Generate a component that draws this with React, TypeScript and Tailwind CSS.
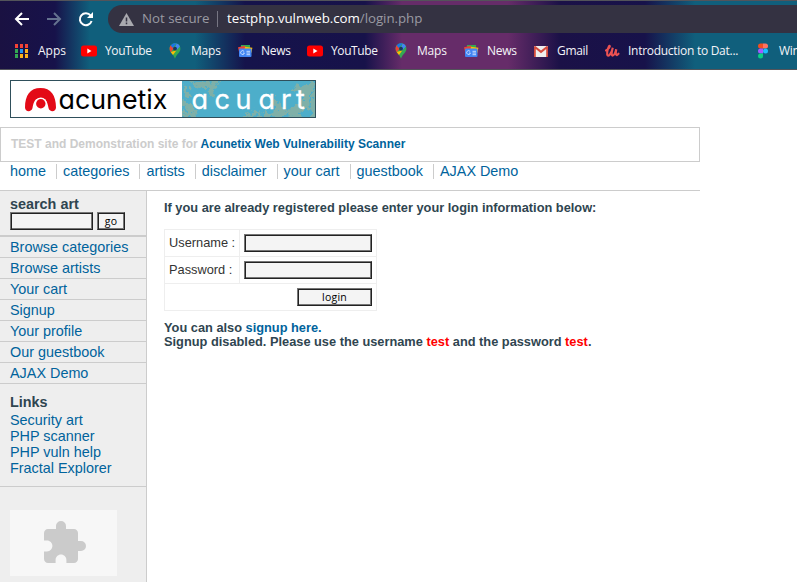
import React from "react";

const UI = "font-['Open_Sans','Noto_Sans',sans-serif]";

function AppsIcon() {
  const c = ["#f44336", "#f44336", "#f44336", "#34a853", "#2196f3", "#fbb01b", "#34a853", "#fbb01b", "#fbb01b"];
  return (
    <svg width="16" height="16" viewBox="0 0 16 16" shapeRendering="crispEdges">
      {c.map((f, i) => (
        <rect key={i} x={1 + (i % 3) * 5} y={1 + Math.floor(i / 3) * 5} width="3" height="4" fill={f} />
      ))}
    </svg>
  );
}

function YouTubeIcon() {
  return (
    <svg width="16" height="16" viewBox="0 0 16 16">
      <rect x="0" y="2.5" width="16" height="11" rx="2.5" fill="#f00" />
      <path d="M6.3 5.6v4.8L10.5 8z" fill="#fff" />
    </svg>
  );
}

function MapsIcon() {
  return (
    <svg width="16" height="16" viewBox="0 0 16 16">
      <path d="M8 .3C5 .3 2.600 2.700 2.600 5.700c0 4 4 5.300 5.400 10 1.400-4.700 5.400-6 5.400-10C13.400 2.700 11 .3 8 .3z" fill="#34a853" />
      <path d="M3.900 2.200 7 5 3.900 9.300C3.100 8.300 2.600 7.200 2.600 5.700c0-1.300.5-2.600 1.300-3.500z" fill="#ea4335" />
      <path d="M3.700 2.400A5.400 5.400 0 0 1 9.600.5L5.700 5z" fill="#1a73e8" />
      <path d="M9.600.5c1.500.4 2.700 1.500 3.300 2.900L9.400 7.200 8 5z" fill="#4285f4" />
      <path d="M3.700 9 9.500 7.200 6 12C5.200 11 4.300 10 3.700 9z" fill="#fbbc04" />
      <circle cx="8" cy="5.700" r="1.900" fill="#18395e" />
    </svg>
  );
}

function NewsIcon() {
  return (
    <svg width="16" height="16" viewBox="0 0 16 16">
      <path d="M4 2h9v5H4z" fill="#34a853" />
      <path d="M1 4.200 8 2.800 9 8 2 9z" fill="#ea4335" />
      <path d="m8 3.700 7.400 1-1 5L7 9z" fill="#fbbc04" />
      <rect x="2" y="5.500" width="12.500" height="8.500" rx="1" fill="#4285f4" />
      <path d="M7.200 8.600a1.900 1.900 0 1 0 .2 1.500H6M9.500 8.300H13M9.500 10H13M9.500 11.700H13" fill="none" stroke="#c5dbff" strokeWidth="1" />
    </svg>
  );
}

function GmailIcon() {
  return (
    <svg width="16" height="16" viewBox="0 0 16 16">
      <rect x="1" y="3" width="14" height="11" rx="1" fill="#eee" />
      <path d="M1 14V4.200q0-1.200 1.300-1.200L8 7.600 13.700 3Q15 3 15 4.200V14h-1.800V6L8 10.200 2.800 6V14z" fill="#d54b3d" />
    </svg>
  );
}

function UdemyIcon() {
  return (
    <svg width="16" height="16" viewBox="0 0 16 16">
      <path d="M2 7.500C4.500 6 6.500 3.500 5.700 2.800S2.500 9 3.200 11.700c.7 2.500 4.100 0 5.600-6.900-1.300 4.200-1.500 7.800-.2 7.800s2.900-3.500 3.700-6.300c-.8 3.500-.5 6 .6 5.800s1-.8 1.600-1.400" fill="none" stroke="#ec5252" strokeWidth="2.100" strokeLinecap="round" />
    </svg>
  );
}

function FigmaIcon() {
  return (
    <svg width="16" height="16" viewBox="0 0 16 16">
      <path d="M8 .5H5.500a2.500 2.500 0 0 0 0 5H8z" fill="#f24e1e" />
      <path d="M8 .5h2.500a2.500 2.500 0 0 1 0 5H8z" fill="#ff7262" />
      <path d="M8 5.500H5.500a2.500 2.500 0 0 0 0 5H8z" fill="#a259ff" />
      <circle cx="10.500" cy="8" r="2.500" fill="#1abcfe" />
      <path d="M8 10.500H5.500A2.500 2.500 0 1 0 8 13z" fill="#0acf83" />
    </svg>
  );
}

const bookmarks = [
  { icon: <AppsIcon />, label: "Apps", cls: "w-[67px]" },
  { icon: <YouTubeIcon />, label: "YouTube", cls: "w-[86px] tracking-[-0.4px]" },
  { icon: <MapsIcon />, label: "Maps", cls: "w-[70px] tracking-[-0.2px]" },
  { icon: <NewsIcon />, label: "News", cls: "w-[70px] tracking-[-0.3px]" },
  { icon: <YouTubeIcon />, label: "YouTube", cls: "w-[86px] tracking-[-0.4px]" },
  { icon: <MapsIcon />, label: "Maps", cls: "w-[70px] tracking-[-0.2px]" },
  { icon: <NewsIcon />, label: "News", cls: "w-[70px] tracking-[-0.3px]" },
  { icon: <GmailIcon />, label: "Gmail", cls: "w-[71px] tracking-[-0.3px]" },
  { icon: <UdemyIcon />, label: "Introduction to Dat...", cls: "w-[151px] tracking-[-0.28px]" },
  { icon: <FigmaIcon />, label: "Win", cls: "w-[90px] tracking-[-0.3px]" },
];

function Browser() {
  return (
    <header
      className={`flex h-[70px] flex-col overflow-hidden border-y border-[#53545a] bg-[linear-gradient(90deg,#1a1142_0,#17124a_55px,#105f7c_90px,#105f7c_195px,#15134b_245px,#17124a_365px,#662c69_402px,#662c69_508px,#1b1147_560px,#17124a_645px,#105f7c_695px,#105f7c_797px)] ${UI}`}
    >
      <div className="mt-1 flex h-7 shrink-0 items-center">
        <svg width="108" height="28" viewBox="0 0 108 28" fill="none" stroke="#fff" strokeWidth="2" className="shrink-0">
          <path d="M29 14H16.500M22 8l-6 6 6 6" />
          <path d="M47 14h12.500M54 8l6 6-6 6" stroke="#65728f" />
          <path d="M90.600 10.500A6 6 0 1 0 91.600 16" />
          <path d="M93 7v6h-6z" fill="#fff" stroke="none" />
        </svg>
        <div className="flex h-7 flex-1 items-center rounded-l-full bg-[#343242] pl-[11px] text-[13.300px] text-[#9a9aa2]">
          <svg width="15" height="13" viewBox="0 0 15 13" className="mr-2 shrink-0">
            <path d="M7.500 0 15 13H0z" fill="#a9a9af" />
            <path d="M7.500 4.500v4M7.500 9.500v1.700" stroke="#343242" strokeWidth="1.500" />
          </svg>
          <span className="w-[75px] whitespace-nowrap">Not secure</span>
          <i className="mr-[9px] h-4 w-px bg-[#777683]" />
          <span className="whitespace-nowrap tracking-[-0.040px]">
            <span className="text-white">testphp.vulnweb.com</span>/login.php
          </span>
        </div>
      </div>
      <nav className="flex h-9 w-[840px] shrink-0 items-center pl-[14px] text-[12px] text-[#f4f4f8]">
        {bookmarks.map((b, i) => (
          <a key={i} className={`flex shrink-0 items-center gap-2 whitespace-nowrap ${b.cls}`}>
            {b.icon}
            <span>{b.label}</span>
          </a>
        ))}
      </nav>
    </header>
  );
}

function Logo() {
  return (
    <svg width="306" height="38" viewBox="0 0 306 38" className="ml-[10px] mt-[10px] block">
      <defs>
        <filter id="fractal" x="-10%" y="-20%" width="120%" height="140%">
          <feTurbulence type="fractalNoise" baseFrequency=".2" numOctaves="3" seed="4" result="n" />
          <feDisplacementMap in="SourceGraphic" in2="n" scale="14" xChannelSelector="R" yChannelSelector="G" />
        </filter>
        <clipPath id="panel">
          <rect x="172" y="1" width="133" height="36" />
        </clipPath>
      </defs>
      <rect width="306" height="38" fill="#fff" />
      <rect x="172" y="1" width="133" height="36" fill="#4daeca" />
      <g clipPath="url(#panel)">
        <g filter="url(#fractal)" fill="none" stroke="#7fb0a8" strokeLinecap="round">
          <path d="M172 22l7 4 4 10M174 34l12-2M184 3l13 3 10-3M199 5l3 9M178 14l-4-6" strokeWidth="5" />
          <path d="M304 2l-7 9-11-3M298 12l-3 13-11 7-13 1M294 25l11 6M272 31l-7-10M268 34l-11 2M286 31l3 8M305 12v24" strokeWidth="6" />
          <path d="M236 37l8-4 9 3" strokeWidth="4" />
        </g>
      </g>
      <rect x=".5" y=".5" width="305" height="37" fill="none" stroke="#2f4f5b" />
      <path d="M15 27.500C15 15.500 20 8 30.500 8S46 15.500 46 27.500c0 4.500-6.500 5-7.500.5C37.500 21.500 35.500 18 30.500 18S23.500 21.500 22.500 28C21.500 32.500 15 32 15 27.500z" fill="#e30a17" />
      <circle cx="30.800" cy="23.500" r="6" fill="#fff" />
      <circle cx="30.800" cy="23.800" r="4.700" fill="#e30a17" />
      <text x="48.500" y="28.500" fontSize="27" textLength="109" lengthAdjust="spacingAndGlyphs" className="font-['Inter',sans-serif] [font-feature-settings:'cv11']">acunetix</text>
      <text x="181.500 204.500 225.500 248.500 271 286" y="28.500" fontSize="27" fill="#fff" stroke="#fff" strokeWidth=".3" className="font-['Inter',sans-serif] [font-feature-settings:'cv11']">acuart</text>
    </svg>
  );
}

const menu = ["home", "categories", "artists", "disclaimer", "your cart", "guestbook", "AJAX Demo"];
const side = ["Browse categories", "Browse artists", "Your cart", "Signup", "Your profile", "Our guestbook", "AJAX Demo"];
const links = ["Security art", "PHP scanner", "PHP vuln help", "Fractal Explorer"];
const field =
  "h-[18px] border border-t-[#767676] border-l-[#767676] border-b-[#222] border-r-[#222] bg-[#f4f4f4] shadow-[inset_1px_1px_0_#222,inset_-1px_-1px_0_#767676]";
const button = `text-[10.500px] leading-[16px] tracking-[0.2px] text-black font-['Open_Sans',sans-serif] ${field}`;

export default function App() {
  return (
    <div className="h-[582px] w-[797px] overflow-hidden bg-white font-['Liberation_Sans',Arial,sans-serif] text-[#2f4550]">
      <Browser />
      <Logo />
      <div className="mt-[9px] h-[35px] w-[700px] border border-[#ccc] pl-[10px] text-[12px] font-bold leading-[33px] text-[#ccc]">
        TEST and Demonstration site for <a className="text-[#00639c]">Acunetix Web Vulnerability Scanner</a>
      </div>
      <nav className="flex h-[28px] w-[700px] pl-[10px] text-[14.400px] leading-[19px] text-[#00639c]">
        {menu.map((t, i) => (
          <div key={t} className="flex whitespace-nowrap">
            {i > 0 && <i className="ml-[10px] mr-[6px] mt-[2px] h-[15px] w-px bg-[#ccc]" />}
            <a>{t}</a>
          </div>
        ))}
      </nav>
      <div className="h-px w-[700px] bg-[#ccc]" />
      <div className="flex h-[391px]">
        <aside className="w-[147px] shrink-0 border-r border-[#ccc] bg-[#eee] text-[14.400px] text-[#00639c]">
          <div className="h-[46px] border-b-2 border-[#ccc] pl-[10px] pt-[5px]">
            <h3 className="h-4 text-[14.400px] font-bold leading-4 text-[#2f4550]">search art</h3>
            <div className="flex gap-1">
              <input className={`w-[83px] ${field}`} />
              <button className={`w-[28px] ${button}`}>go</button>
            </div>
          </div>
          {side.map((t) => (
            <div key={t} className="h-[21px] border-b border-[#ccc] pl-[10px] leading-[20px]">{t}</div>
          ))}
          <div className="h-[103px] border-b border-[#ccc] pl-[10px] pt-[10px]">
            <h3 className="h-[18px] text-[14.400px] font-bold leading-[17px] text-[#2f4550]">Links</h3>
            {links.map((t) => (
              <div key={t} className="h-4 leading-4">{t}</div>
            ))}
          </div>
          <div className="ml-[10px] mt-[23px] flex h-[66px] w-[107px] items-center justify-center bg-[#f7f7f7]">
            <svg width="48" height="48" viewBox="0 0 24 24" fill="#cbcbcb">
              <path d="M20.500 11H19V7c0-1.100-.9-2-2-2h-4V3.500a2.500 2.500 0 0 0-5 0V5H4c-1.100 0-1.990.9-1.990 2v3.800H3.500c1.490 0 2.700 1.210 2.700 2.700s-1.210 2.700-2.700 2.700H2V20c0 1.100.9 2 2 2h3.800v-1.500c0-1.490 1.210-2.700 2.700-2.700s2.700 1.210 2.700 2.700V22H17c1.100 0 2-.9 2-2v-4h1.500a2.500 2.500 0 0 0 0-5z" />
            </svg>
          </div>
        </aside>
        <main className="pl-[17px] pt-[9px]">
          <h3 className="h-[29px] whitespace-nowrap text-[12.800px] font-bold leading-4">If you are already registered please enter your login information below:</h3>
          <table className="w-[213px] border-collapse text-[12.800px] text-[#333]">
            <tbody>
              {["Username :", "Password :"].map((t) => (
                <tr key={t} className="h-[27px]">
                  <td className="w-[75px] border border-[#eee] p-0 pl-1">{t}</td>
                  <td className="border border-[#eee] p-0 pl-1">
                    <input className={`block w-[128px] ${field}`} />
                  </td>
                </tr>
              ))}
              <tr className="h-[27px]">
                <td colSpan={2} className="border border-[#eee] p-0 pr-1">
                  <button className={`ml-auto block w-[75px] ${button}`}>login</button>
                </td>
              </tr>
            </tbody>
          </table>
          <div className="mt-[10px] whitespace-nowrap text-[12.800px] font-bold leading-[14px]">
            You can also <a className="text-[#00639c]">signup here.</a>
            <br />
            Signup disabled. Please use the username <b className="text-[#f00]">test</b> and the password <b className="text-[#f00]">test</b>.
          </div>
        </main>
      </div>
    </div>
  );
}
